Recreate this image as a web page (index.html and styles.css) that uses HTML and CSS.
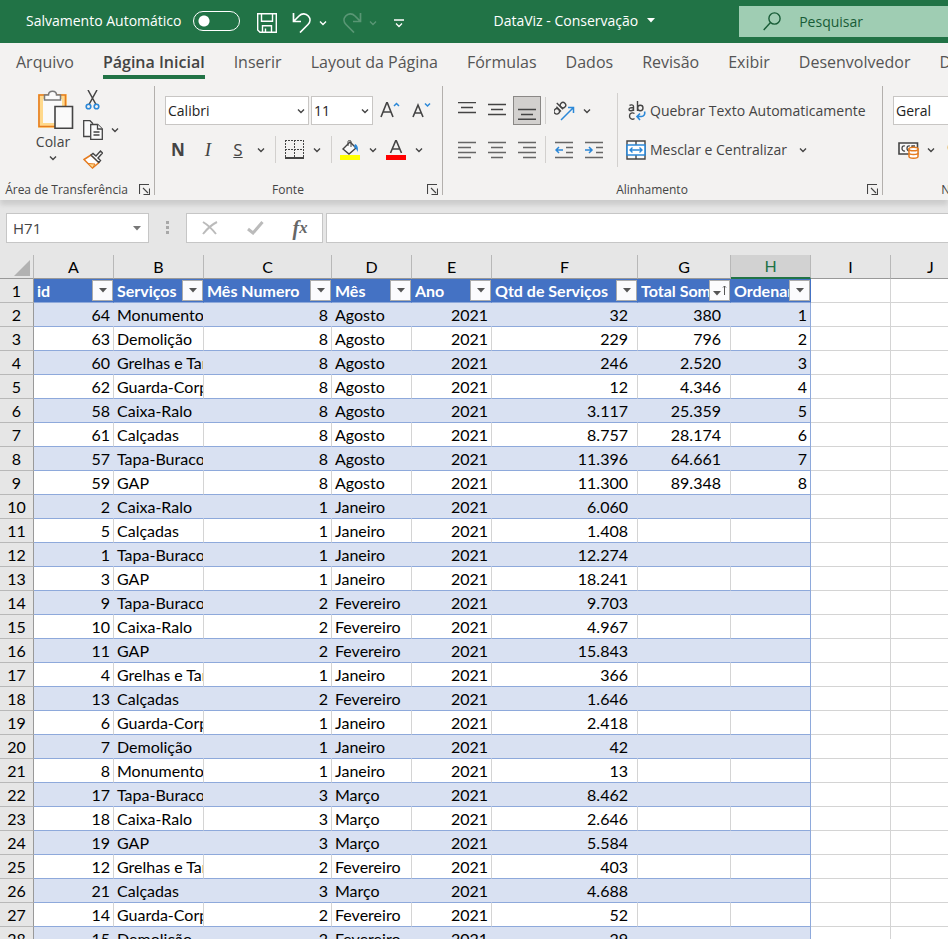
FILE: index.html
```html
<!DOCTYPE html>
<html lang="pt-BR">
<head>
  <meta charset="utf-8">
  <title>DataViz - Conservação</title>
  <link rel="stylesheet" href="styles.css">
</head>
<body>
  <svg class="defs" aria-hidden="true">
    <symbol id="chevron" viewBox="0 0 8 8"><path d="M1 2.5l3 3 3-3" fill="none" stroke="currentColor" stroke-width="1.4"/></symbol>
    <symbol id="launcher" viewBox="0 0 11 11"><path d="M.5 10V.5H10M4 4l5 5M10.500 4.500v6h-6" fill="none" stroke="#444" stroke-width="1.100"/></symbol>
    <symbol id="arrow" viewBox="0 0 8 5"><path d="M0 0h8L4 4.500z" fill="currentColor"/></symbol>
  </svg>

  <header class="titlebar">
    <label class="autosave">Salvamento Automático <input type="checkbox" role="switch"></label>
    <div class="quick">
      <button aria-label="Salvar"><svg width="20" height="20" viewBox="0 0 20 20" fill="none" stroke="#fff" stroke-width="1.400"><path d="M.7.7h18.600v18.600H3L.7 17zM4.500 1v7.300h11V1M5.500 19v-6.300h9V19M8.500 19v-3.500"/></svg></button>
      <button class="undo" aria-label="Desfazer"><svg width="20" height="20" viewBox="0 0 20 20" fill="none" stroke="#fff" stroke-width="1.700"><path d="M1.500 0v8.500H9M2 8l5-5c3-3 7-2.500 9.300 0s2.200 6-.3 8.500L8 19.500"/></svg></button>
      <button aria-label="Opções de desfazer"><svg width="8" height="8"><use href="#chevron"/></svg></button>
      <button class="undo off" aria-label="Refazer"><svg width="20" height="20" viewBox="0 0 20 20" fill="none" stroke="#fff" stroke-width="1.700"><path d="M18.500 0v8.500H11M18 8l-5-5c-3-3-7-2.500-9.300 0s-2.200 6 .3 8.500l8 8"/></svg></button>
      <button class="off" aria-label="Opções de refazer"><svg width="8" height="8"><use href="#chevron"/></svg></button>
      <button class="more" aria-label="Personalizar"><svg width="10" height="9" viewBox="0 0 10 9" fill="none" stroke="#fff" stroke-width="1.300"><path d="M0 1h10M2 4.500l3 3 3-3"/></svg></button>
    </div>
    <button class="filename">DataViz - Conservação <svg width="8" height="5"><use href="#arrow"/></svg></button>
    <label class="search">
      <svg width="18" height="19" viewBox="0 0 18 19" fill="none" stroke="#185c37" stroke-width="1.400"><circle cx="11.500" cy="6.500" r="5.600"/><path d="M7.500 10.500L.7 18"/></svg>
      <input type="search" placeholder="Pesquisar" aria-label="Pesquisar">
    </label>
  </header>

  <nav class="tabs">
    <a href="#">Arquivo</a>
    <a href="#" class="active">Página Inicial</a>
    <a href="#">Inserir</a>
    <a href="#">Layout da Página</a>
    <a href="#">Fórmulas</a>
    <a href="#">Dados</a>
    <a href="#">Revisão</a>
    <a href="#">Exibir</a>
    <a href="#">Desenvolvedor</a>
    <a href="#">D</a>
  </nav>

  <div class="ribbon">
    <section class="group clipboard">
      <div class="tools">
        <button class="paste">
          <svg width="42" height="39" viewBox="-6 0 42 39"><path d="M2.500 6.500h24v29h-24z" fill="#fafafa" stroke="#ffd98c" stroke-width="5"/><path d="M1 5h26.500v31.500H1z" fill="none" stroke="#e57c20" stroke-width="1.600"/><path d="M6.500 10V5h4c0-5 8-5 8 0h4v5z" fill="#fafafa" stroke="#7a7a7a" stroke-width="1.500"/><path d="M17 16.500h17.500v21.700H17z" fill="#fafafa" stroke="#444" stroke-width="1.600"/></svg>
          Colar
          <svg width="8" height="8"><use href="#chevron"/></svg>
        </button>
        <div class="edit">
          <button aria-label="Recortar"><svg width="20" height="20" viewBox="0 0 20 20" fill="none"><path d="M5 0l8 14.500M14 0L6 14.500" stroke="#444" stroke-width="1.500"/><circle cx="5.500" cy="16.500" r="2.300" stroke="#2b88d8" stroke-width="1.600"/><circle cx="13.500" cy="16.500" r="2.300" stroke="#2b88d8" stroke-width="1.600"/></svg></button>
          <span class="pair">
            <button aria-label="Copiar"><svg width="20" height="20" viewBox="0 0 20 20" fill="#fafafa" stroke="#444" stroke-width="1.300"><path d="M7 16.500H.7V.7H7l3 3"/><path d="M7.700 4.500h7l4.600 4.500v10.300H7.700z"/><path d="M14.500 4.500V9h4.800M10.500 12h6M10.500 15h6"/></svg></button>
            <button aria-label="Opções de copiar"><svg width="8" height="8"><use href="#chevron"/></svg></button>
          </span>
          <button aria-label="Pincel de Formatação"><svg width="20" height="19" viewBox="0 0 20 19"><path d="M1 9.500L8 5l8 7.500L9.500 18z" fill="#fff" stroke="#e57c20" stroke-width="1.500"/><path d="M5 13.500l7 .5-2.500 4z" fill="#ffd98c" stroke="#e57c20"/><path d="M8 5l2-1.500 3 2.500 4.500-5L19.500 3l-4.500 5 2.500 2.500-1.800 2z" fill="#fafafa" stroke="#444" stroke-width="1.400"/></svg></button>
        </div>
      </div>
      <footer><span>Área de Transferência</span><button aria-label="Mais opções da área de transferência"><svg width="11" height="11"><use href="#launcher"/></svg></button></footer>
    </section>

    <section class="group font">
      <div class="tools stack">
        <div class="row">
          <span class="picker"><select class="family" aria-label="Fonte"><option>Calibri</option></select><svg width="8" height="8"><use href="#chevron"/></svg></span>
          <span class="picker"><select class="size" aria-label="Tamanho da fonte"><option>11</option></select><svg width="8" height="8"><use href="#chevron"/></svg></span>
          <button class="grow" aria-label="Aumentar fonte"><svg width="21" height="18" viewBox="0 0 21 18" fill="none"><path d="M1 15L7 0l6 15M3 10h8" stroke="#444" stroke-width="1.600"/><path d="M14 4l2.500-2.500L19 4" stroke="#2b88d8" stroke-width="1.500"/></svg></button>
          <button class="grow" aria-label="Diminuir fonte"><svg width="21" height="18" viewBox="0 0 21 18" fill="none"><path d="M1 15L6 3l5 12M3 11h6" stroke="#444" stroke-width="1.600"/><path d="M13 1.500L15.500 4 18 1.500" stroke="#2b88d8" stroke-width="1.500"/></svg></button>
        </div>
        <div class="row">
          <button class="tool letter bold">N</button>
          <button class="tool letter italic">I</button>
          <button class="tool letter under">S</button>
          <button class="drop" aria-label="Opções de sublinhado"><svg width="8" height="8"><use href="#chevron"/></svg></button>
          <i class="sep"></i>
          <button class="tool" aria-label="Bordas"><svg width="19" height="19" viewBox="0 0 19 19" fill="none" stroke="#444"><path d="M0 .5h19M.5 0v17M18.500 0v17M9.500 0v17M0 9.500h19" stroke-dasharray="2 1"/><path d="M0 18h19" stroke-width="2"/></svg></button>
          <button class="drop" aria-label="Opções de bordas"><svg width="8" height="8"><use href="#chevron"/></svg></button>
          <i class="sep"></i>
          <button class="tool" aria-label="Cor de preenchimento"><svg width="20" height="20" viewBox="0 0 20 20"><path d="M3 9l7-7 6 6-7 6z" fill="#fafafa" stroke="#444" stroke-width="1.400"/><path d="M8 6V1.500c0-1.500 3-1.500 3 0V7" fill="none" stroke="#444"/><path d="M15 4c3 1 3.500 5 2.500 8-1-3-2-4-3.500-5z" fill="#2b88d8"/><path d="M0 15h20v5H0z" fill="#ff0"/></svg></button>
          <button class="drop" aria-label="Opções de preenchimento"><svg width="8" height="8"><use href="#chevron"/></svg></button>
          <button class="tool" aria-label="Cor da fonte"><svg width="20" height="20" viewBox="0 0 20 20"><path d="M4.500 13L10 0l5.500 13M6.500 9h7" fill="none" stroke="#444" stroke-width="1.600"/><path d="M0 15h20v5H0z" fill="#f00"/></svg></button>
          <button class="drop" aria-label="Opções de cor da fonte"><svg width="8" height="8"><use href="#chevron"/></svg></button>
        </div>
      </div>
      <footer><span>Fonte</span><button aria-label="Mais opções de fonte"><svg width="11" height="11"><use href="#launcher"/></svg></button></footer>
    </section>

    <section class="group align">
      <div class="tools">
        <div class="stack">
          <div class="row">
            <button class="tool" aria-label="Alinhar em cima"><svg width="18" height="18" viewBox="0 0 18 18" stroke="#444" stroke-width="1.400"><path d="M0 -.5h18M3 4.500h12M0 9.500h18" transform="translate(0 1)"/></svg></button>
            <button class="tool" aria-label="Alinhar no meio"><svg width="18" height="18" viewBox="0 0 18 18" stroke="#444" stroke-width="1.400"><path d="M0 2.500h18M3 7.500h12M0 12.500h18"/></svg></button>
            <button class="tool pressed" aria-label="Alinhar embaixo"><svg width="18" height="18" viewBox="0 0 18 18" stroke="#444" stroke-width="1.400"><path d="M0 7.500h18M3 12.500h12M0 17.300h18"/></svg></button>
            <i class="sep"></i>
            <button class="tool" aria-label="Orientação"><svg width="21" height="20" viewBox="0 0 21 20" fill="none"><g transform="rotate(-45 7 9)" stroke="#444" stroke-width="1.400"><circle cx="3" cy="7" r="2.700"/><path d="M6 3.500V10M9 1v9"/><circle cx="11.800" cy="7" r="2.700"/></g><path d="M7 19L19 7M14 6.500h5.500V12" stroke="#2b88d8" stroke-width="1.500"/></svg></button>
            <button class="drop" aria-label="Opções de orientação"><svg width="8" height="8"><use href="#chevron"/></svg></button>
          </div>
          <div class="row">
            <button class="tool" aria-label="Alinhar à esquerda"><svg width="18" height="18" viewBox="0 0 18 18" stroke="#666" stroke-width="1.500"><path d="M0 1.500h18M0 6.500h13M0 11.500h18M0 16.500h13"/></svg></button>
            <button class="tool" aria-label="Centralizar"><svg width="18" height="18" viewBox="0 0 18 18" stroke="#666" stroke-width="1.500"><path d="M0 1.500h18M3 6.500h12M0 11.500h18M3 16.500h12"/></svg></button>
            <button class="tool" aria-label="Alinhar à direita"><svg width="18" height="18" viewBox="0 0 18 18" stroke="#666" stroke-width="1.500"><path d="M0 1.500h18M5 6.500h13M0 11.500h18M5 16.500h13"/></svg></button>
            <i class="sep"></i>
            <button class="tool" aria-label="Diminuir recuo"><svg width="18" height="18" viewBox="0 0 18 18" fill="none" stroke="#666" stroke-width="1.500"><path d="M0 1.500h18M11 6.500h7M11 11.500h7M0 16.500h18"/><path d="M8 9H1M4 6L1 9l3 3" stroke="#2b88d8"/></svg></button>
            <button class="tool" aria-label="Aumentar recuo"><svg width="18" height="18" viewBox="0 0 18 18" fill="none" stroke="#666" stroke-width="1.500"><path d="M0 1.500h18M11 6.500h7M11 11.500h7M0 16.500h18"/><path d="M0 9h7M4 6l3 3-3 3" stroke="#2b88d8"/></svg></button>
          </div>
        </div>
        <i class="sep tall"></i>
        <div class="stack">
          <div class="row">
            <button class="wide"><svg width="20" height="20" viewBox="0 0 20 20" fill="none" stroke="#444" stroke-width="1.400"><path d="M3.500 4.500c1-1 4-1 4 1V10M7.500 6.500C5 6.500 3 7 3 8.500s3 2 4.500 0M11.500 0v10"/><circle cx="14.300" cy="7" r="2.700"/><path d="M8.500 12.500c-2-1.300-5-.5-5 2.500s3 4 5 2.500"/><path d="M18.500 10.500c1 3-1 5-3 5H11M14 12.500l-3 3 3 3.500" stroke="#2b88d8" stroke-width="1.600"/></svg>Quebrar Texto Automaticamente</button>
          </div>
          <div class="row">
            <button class="wide"><svg width="20" height="20" viewBox="0 0 20 20" fill="none" stroke="#444" stroke-width="1.400"><path d="M1 1h18v18H1zM10 1v4M10 15v4" fill="#fafafa"/><path d="M1 5h18v10H1z" fill="#fff" stroke="#2b88d8" stroke-width="1.600"/><path d="M4 10h12M6.500 7.500L4 10l2.500 2.500M13.500 7.500L16 10l-2.500 2.500" stroke="#2b88d8"/></svg>Mesclar e Centralizar</button>
            <button class="drop" aria-label="Opções de mesclar"><svg width="8" height="8"><use href="#chevron"/></svg></button>
          </div>
        </div>
      </div>
      <footer><span>Alinhamento</span><button aria-label="Mais opções de alinhamento"><svg width="11" height="11"><use href="#launcher"/></svg></button></footer>
    </section>

    <section class="group number">
      <div class="tools stack">
        <div class="row">
          <span class="picker"><select class="family" aria-label="Formato de número"><option>Geral</option></select><svg width="8" height="8"><use href="#chevron"/></svg></span>
        </div>
        <div class="row">
          <button class="tool" aria-label="Formato de contabilização"><svg width="21" height="18" viewBox="0 0 21 18" fill="none"><path d="M1 2h18.500v11H1z" fill="#fafafa" stroke="#444" stroke-width="1.600"/><path d="M7 5c-4-1.500-4 6 0 5M12 5c-4-1.500-4 6 0 5M14 10V5h3" stroke="#444" stroke-width="1.300"/><path d="M11 8v7.500c0 2.300 9 2.300 9 0V8z" fill="#fff" stroke="#e57c20" stroke-width="1.500"/><ellipse cx="15.500" cy="8" rx="4.500" ry="1.800" fill="#fff" stroke="#e57c20" stroke-width="1.500"/><path d="M11 12c0 2 9 2 9 0" stroke="#e57c20" stroke-width="1.500"/></svg></button>
          <button class="drop" aria-label="Opções de moeda"><svg width="8" height="8"><use href="#chevron"/></svg></button>
          <button class="tool letter">%</button>
        </div>
      </div>
      <footer><span>Número</span></footer>
    </section>
  </div>

  <div class="formula">
    <span class="picker"><input class="namebox" value="H71" aria-label="Caixa de nome"><svg width="8" height="5"><use href="#arrow"/></svg></span>
    <svg class="grip" width="3" height="14" viewBox="0 0 3 14" fill="#a8a8a8"><path d="M0 0h3v3H0zM0 5h3v3H0zM0 10h3v3H0z"/></svg>
    <div class="commit">
      <button aria-label="Cancelar"><svg width="16" height="14" viewBox="0 0 16 14" fill="none" stroke="#bbb" stroke-width="2"><path d="M1 1c5 3 9 7 13 12M15 1C9 4 5 8 1 13"/></svg></button>
      <button aria-label="Inserir"><svg width="17" height="14" viewBox="0 0 17 14" fill="none" stroke="#bbb" stroke-width="3"><path d="M1 8l5 4L15.500 1"/></svg></button>
      <button class="fx" aria-label="Inserir função">f<small>x</small></button>
    </div>
    <input class="entry" aria-label="Barra de fórmulas">
  </div>

  <main class="sheet">
    <table>
      <colgroup>
        <col class="w34"><col class="w80"><col class="w90"><col class="w128"><col class="w80"><col class="w80"><col class="w146"><col class="w93"><col class="w80"><col class="w80"><col class="w80"><col>
      </colgroup>
      <thead>
        <tr><th class="corner"><svg width="16" height="16" viewBox="0 0 16 16"><path d="M16 0v16H0z" fill="#b2b2b2"/></svg></th><th>A</th><th>B</th><th>C</th><th>D</th><th>E</th><th>F</th><th>G</th><th class="current">H</th><th>I</th><th>J</th></tr>
      </thead>
      <tbody>
        <tr class="fields">
          <th>1</th>
          <td><div><span>id</span><button aria-label="Filtrar id"><svg width="8" height="5"><use href="#arrow"/></svg></button></div></td>
          <td><div><span>Serviços</span><button aria-label="Filtrar Serviços"><svg width="8" height="5"><use href="#arrow"/></svg></button></div></td>
          <td><div><span>Mês Numero</span><button aria-label="Filtrar Mês Numero"><svg width="8" height="5"><use href="#arrow"/></svg></button></div></td>
          <td><div><span>Mês</span><button aria-label="Filtrar Mês"><svg width="8" height="5"><use href="#arrow"/></svg></button></div></td>
          <td><div><span>Ano</span><button aria-label="Filtrar Ano"><svg width="8" height="5"><use href="#arrow"/></svg></button></div></td>
          <td><div><span>Qtd de Serviços</span><button aria-label="Filtrar Qtd de Serviços"><svg width="8" height="5"><use href="#arrow"/></svg></button></div></td>
          <td><div><span>Total Soma</span><button aria-label="Filtrar Total Soma"><svg width="14" height="12" viewBox="0 0 14 12"><path d="M0 6h8L4 10.500z" fill="#555"/><path d="M11.500 10V1M10 2.500L11.500 1 13 2.500" fill="none" stroke="#555"/></svg></button></div></td>
          <td><div><span>Ordenar</span><button aria-label="Filtrar Ordenar"><svg width="8" height="5"><use href="#arrow"/></svg></button></div></td>
          <td></td><td></td>
        </tr>
        <tr><th>2</th><td>64</td><td>Monumentos</td><td>8</td><td>Agosto</td><td>2021</td><td>32</td><td>380</td><td>1</td><td></td><td></td></tr>
        <tr><th>3</th><td>63</td><td>Demolição</td><td>8</td><td>Agosto</td><td>2021</td><td>229</td><td>796</td><td>2</td><td></td><td></td></tr>
        <tr><th>4</th><td>60</td><td>Grelhas e Tampas</td><td>8</td><td>Agosto</td><td>2021</td><td>246</td><td>2.520</td><td>3</td><td></td><td></td></tr>
        <tr><th>5</th><td>62</td><td>Guarda-Corpo</td><td>8</td><td>Agosto</td><td>2021</td><td>12</td><td>4.346</td><td>4</td><td></td><td></td></tr>
        <tr><th>6</th><td>58</td><td>Caixa-Ralo</td><td>8</td><td>Agosto</td><td>2021</td><td>3.117</td><td>25.359</td><td>5</td><td></td><td></td></tr>
        <tr><th>7</th><td>61</td><td>Calçadas</td><td>8</td><td>Agosto</td><td>2021</td><td>8.757</td><td>28.174</td><td>6</td><td></td><td></td></tr>
        <tr><th>8</th><td>57</td><td>Tapa-Buraco</td><td>8</td><td>Agosto</td><td>2021</td><td>11.396</td><td>64.661</td><td>7</td><td></td><td></td></tr>
        <tr><th>9</th><td>59</td><td>GAP</td><td>8</td><td>Agosto</td><td>2021</td><td>11.300</td><td>89.348</td><td>8</td><td></td><td></td></tr>
        <tr><th>10</th><td>2</td><td>Caixa-Ralo</td><td>1</td><td>Janeiro</td><td>2021</td><td>6.060</td><td></td><td></td><td></td><td></td></tr>
        <tr><th>11</th><td>5</td><td>Calçadas</td><td>1</td><td>Janeiro</td><td>2021</td><td>1.408</td><td></td><td></td><td></td><td></td></tr>
        <tr><th>12</th><td>1</td><td>Tapa-Buraco</td><td>1</td><td>Janeiro</td><td>2021</td><td>12.274</td><td></td><td></td><td></td><td></td></tr>
        <tr><th>13</th><td>3</td><td>GAP</td><td>1</td><td>Janeiro</td><td>2021</td><td>18.241</td><td></td><td></td><td></td><td></td></tr>
        <tr><th>14</th><td>9</td><td>Tapa-Buraco</td><td>2</td><td>Fevereiro</td><td>2021</td><td>9.703</td><td></td><td></td><td></td><td></td></tr>
        <tr><th>15</th><td>10</td><td>Caixa-Ralo</td><td>2</td><td>Fevereiro</td><td>2021</td><td>4.967</td><td></td><td></td><td></td><td></td></tr>
        <tr><th>16</th><td>11</td><td>GAP</td><td>2</td><td>Fevereiro</td><td>2021</td><td>15.843</td><td></td><td></td><td></td><td></td></tr>
        <tr><th>17</th><td>4</td><td>Grelhas e Tampas</td><td>1</td><td>Janeiro</td><td>2021</td><td>366</td><td></td><td></td><td></td><td></td></tr>
        <tr><th>18</th><td>13</td><td>Calçadas</td><td>2</td><td>Fevereiro</td><td>2021</td><td>1.646</td><td></td><td></td><td></td><td></td></tr>
        <tr><th>19</th><td>6</td><td>Guarda-Corpo</td><td>1</td><td>Janeiro</td><td>2021</td><td>2.418</td><td></td><td></td><td></td><td></td></tr>
        <tr><th>20</th><td>7</td><td>Demolição</td><td>1</td><td>Janeiro</td><td>2021</td><td>42</td><td></td><td></td><td></td><td></td></tr>
        <tr><th>21</th><td>8</td><td>Monumentos</td><td>1</td><td>Janeiro</td><td>2021</td><td>13</td><td></td><td></td><td></td><td></td></tr>
        <tr><th>22</th><td>17</td><td>Tapa-Buraco</td><td>3</td><td>Março</td><td>2021</td><td>8.462</td><td></td><td></td><td></td><td></td></tr>
        <tr><th>23</th><td>18</td><td>Caixa-Ralo</td><td>3</td><td>Março</td><td>2021</td><td>2.646</td><td></td><td></td><td></td><td></td></tr>
        <tr><th>24</th><td>19</td><td>GAP</td><td>3</td><td>Março</td><td>2021</td><td>5.584</td><td></td><td></td><td></td><td></td></tr>
        <tr><th>25</th><td>12</td><td>Grelhas e Tampas</td><td>2</td><td>Fevereiro</td><td>2021</td><td>403</td><td></td><td></td><td></td><td></td></tr>
        <tr><th>26</th><td>21</td><td>Calçadas</td><td>3</td><td>Março</td><td>2021</td><td>4.688</td><td></td><td></td><td></td><td></td></tr>
        <tr><th>27</th><td>14</td><td>Guarda-Corpo</td><td>2</td><td>Fevereiro</td><td>2021</td><td>52</td><td></td><td></td><td></td><td></td></tr>
        <tr><th>28</th><td>15</td><td>Demolição</td><td>2</td><td>Fevereiro</td><td>2021</td><td>29</td><td></td><td></td><td></td><td></td></tr>
      </tbody>
    </table>
  </main>
</body>
</html>
```

FILE: styles.css
```css
* {
  box-sizing: border-box;
}
body {
  margin: 0;
  height: 100vh;
  display: flex;
  flex-direction: column;
  overflow: hidden;
  background: #e6e6e6;
  color: #444;
  font-family: "Open Sans", "Noto Sans", sans-serif;
  font-size: 14px;
}
button, input, select {
  font: inherit;
  color: inherit;
  margin: 0;
  padding: 0;
  border: 0;
  border-radius: 0;
  background: none;
}
button {
  display: flex;
  align-items: center;
  justify-content: center;
  white-space: nowrap;
}
svg {
  display: block;
  flex: none;
}
.defs {
  position: absolute;
  width: 0;
  height: 0;
}

/* title bar */
.titlebar {
  display: flex;
  align-items: center;
  flex: none;
  height: 43px;
  padding-left: 26px;
  background: #217346;
  color: #fff;
}
.autosave {
  display: flex;
  align-items: center;
  gap: 12px;
  padding-bottom: 2px;
  white-space: nowrap;
}
.autosave input {
  appearance: none;
  width: 47px;
  height: 20px;
  border: 1px solid #fff;
  border-radius: 10px;
  background: radial-gradient(circle at 10px 9px, #fff 5px, transparent 6px);
}
.quick {
  display: flex;
  align-items: center;
  gap: 7px;
  margin-left: 17px;
  padding-top: 3px;
}
.quick .undo {
  margin-left: 8px;
}
.quick .off {
  opacity: 0.25;
}
.quick .more {
  margin-left: 10px;
}
.filename {
  gap: 9px;
  margin-left: 89px;
  padding-bottom: 3px;
}
.search {
  display: flex;
  align-items: center;
  flex: 1;
  gap: 18px;
  height: 31px;
  margin-left: 84px;
  padding-left: 24px;
  background: #9fcdb3;
}
.search input {
  flex: 1;
  min-width: 0;
}
.search input::placeholder {
  color: #185c37;
  opacity: 1;
}

/* ribbon tabs */
.tabs {
  display: flex;
  flex: none;
  gap: 29px;
  height: 43px;
  padding: 6px 0 0 16px;
  background: #f3f2f1;
  font-size: 16px;
}
.tabs a {
  height: 30px;
  line-height: 26px;
  color: #555;
  text-decoration: none;
  white-space: nowrap;
}
.tabs .active {
  border-bottom: 4px solid #217346;
  color: #444;
  font-weight: 600;
}

/* ribbon */
.ribbon {
  display: flex;
  flex: none;
  height: 114px;
  background: #f3f2f1;
  box-shadow: 0 5px 5px #ccc;
}
.group {
  display: flex;
  flex: none;
  flex-direction: column;
  justify-content: space-between;
  height: 109px;
  border-right: 1px solid #b3b0ad;
}
.group footer {
  display: flex;
  align-items: center;
  height: 11px;
  padding-right: 4px;
  font-size: 12px;
}
.group footer span {
  flex: 1;
  padding-right: 6px;
  text-align: center;
  white-space: nowrap;
}
.tools {
  display: flex;
}
.stack {
  display: flex;
  flex-direction: column;
  gap: 10px;
  padding-top: 10px;
}
.row {
  display: flex;
  align-items: center;
  height: 29px;
}
.tool {
  width: 30px;
  height: 29px;
}
.drop {
  width: 16px;
  height: 29px;
}
.pressed {
  width: 28px;
  margin: 0 1px;
  border: 1px solid #8a8886;
  background: #d2d0ce;
}
.sep {
  flex: none;
  width: 1px;
  height: 27px;
  margin: 0 3px;
  background: #d2d0ce;
}
.sep.tall {
  height: 74px;
  margin: 7px 8px 0;
}
.letter {
  font-size: 17px;
}
.bold {
  font-weight: 700;
}
.italic {
  font-family: "Liberation Serif", serif;
  font-size: 19px;
  font-style: italic;
}
.under {
  text-decoration: underline;
}
.clipboard {
  width: 155px;
}
.clipboard .tools {
  gap: 8px;
  padding: 4px 0 0 31px;
}
.paste {
  flex-direction: column;
  justify-content: flex-start;
  width: 44px;
  gap: 3px;
}
.edit {
  display: flex;
  flex-direction: column;
  align-items: flex-start;
  gap: 10px;
}
.pair {
  display: flex;
  gap: 8px;
}
.font {
  width: 288px;
}
.font .tools {
  padding-left: 8px;
}
.font .sep {
  margin: 0 3px 0 6px;
}
.font .row:first-child {
  gap: 2px;
  padding-left: 2px;
}
.grow {
  width: 30px;
}
.picker {
  display: inline-grid;
  align-items: center;
}
.picker > * {
  grid-area: 1 / 1;
}
.picker svg {
  justify-self: end;
  margin-right: 4px;
  pointer-events: none;
}
.picker select {
  appearance: none;
  height: 29px;
  padding: 0 2px;
  border: 1px solid #c8c6c4;
  background: #fff;
  color: #222;
}
.family {
  width: 144px;
}
.size {
  width: 62px;
}
.align {
  width: 440px;
}
.align .tools {
  padding-left: 9px;
}
.wide {
  gap: 4px;
}
.wide + .drop {
  margin-left: 8px;
}
.number {
  width: 170px;
}
.number .tools {
  padding-left: 10px;
}
.number footer {
  padding: 0;
}

/* formula bar */
.formula {
  display: flex;
  align-items: center;
  flex: none;
  height: 55px;
  padding: 1px 0 0 6px;
}
.formula input, .commit {
  height: 30px;
  border: 1px solid #c6c6c6;
  background: #fff;
}
.formula .namebox {
  width: 143px;
  padding-left: 6px;
  font-size: 15px;
}
.formula .picker svg {
  margin-right: 8px;
  color: #777;
}
.grip {
  margin: 0 17px;
}
.commit {
  display: flex;
  align-items: center;
  justify-content: space-around;
  width: 137px;
  margin-right: 3px;
}
.fx {
  font: italic bold 20px "Liberation Serif", serif;
  color: #666;
}
.formula .entry {
  flex: 1;
  min-width: 0;
  border-right: 0;
}

/* grid */
.sheet {
  flex: 1;
  min-height: 0;
  overflow: hidden;
  color: #000;
  font-family: Lato, "Open Sans", sans-serif;
  font-size: 16px;
}
table {
  width: 100%;
  table-layout: fixed;
  border-collapse: separate;
  border-spacing: 0;
}
.w34 { width: 34px; }
.w80 { width: 80px; }
.w90 { width: 90px; }
.w93 { width: 93px; }
.w128 { width: 128px; }
.w146 { width: 146px; }
th, td {
  height: 24px;
  padding: 0 3px;
  line-height: 23px;
  overflow: hidden;
  white-space: nowrap;
  border-right: 1px solid #d4d4d4;
  border-bottom: 1px solid #d4d4d4;
}
th {
  padding: 0;
  background: #e6e6e6;
  font-weight: 400;
  text-align: center;
  border-color: #b8b8b8;
}
thead th {
  border-bottom-color: #999;
}
tbody th {
  border-right-color: #999;
}
.corner svg {
  margin: 3px 3px 0 auto;
}
.current {
  background: #d2d2d2;
  color: #217346;
  border-bottom: 2px solid #217346;
  line-height: 22px;
}
td {
  background: #fff;
  text-align: right;
}
td:nth-child(3), td:nth-child(5) {
  text-align: left;
}
td:nth-child(7), td:nth-child(8) {
  padding-right: 9px;
}
td:nth-child(-n+9) {
  border-bottom-color: #8ea9db;
}
td:nth-child(9) {
  border-right-color: #8ea9db;
}
tbody tr:nth-child(even) td:nth-child(-n+9) {
  background: #d9e1f2;
}
tbody tr:nth-child(even) td:nth-child(-n+8) {
  border-right-color: #d9e1f2;
}
.fields td:nth-child(-n+9) {
  padding: 0 0 0 3px;
  background: #4472c4;
  border-right-color: #4472c4;
  color: #fff;
  font-weight: 700;
  text-align: left;
}
.fields div {
  display: flex;
  align-items: center;
  height: 23px;
}
.fields span {
  flex: 1;
  min-width: 0;
  overflow: hidden;
}
.fields button {
  flex: none;
  width: 21px;
  height: 21px;
  border: 1px solid #ababab;
  background: #fbfbfd;
  color: #555;
}
```
